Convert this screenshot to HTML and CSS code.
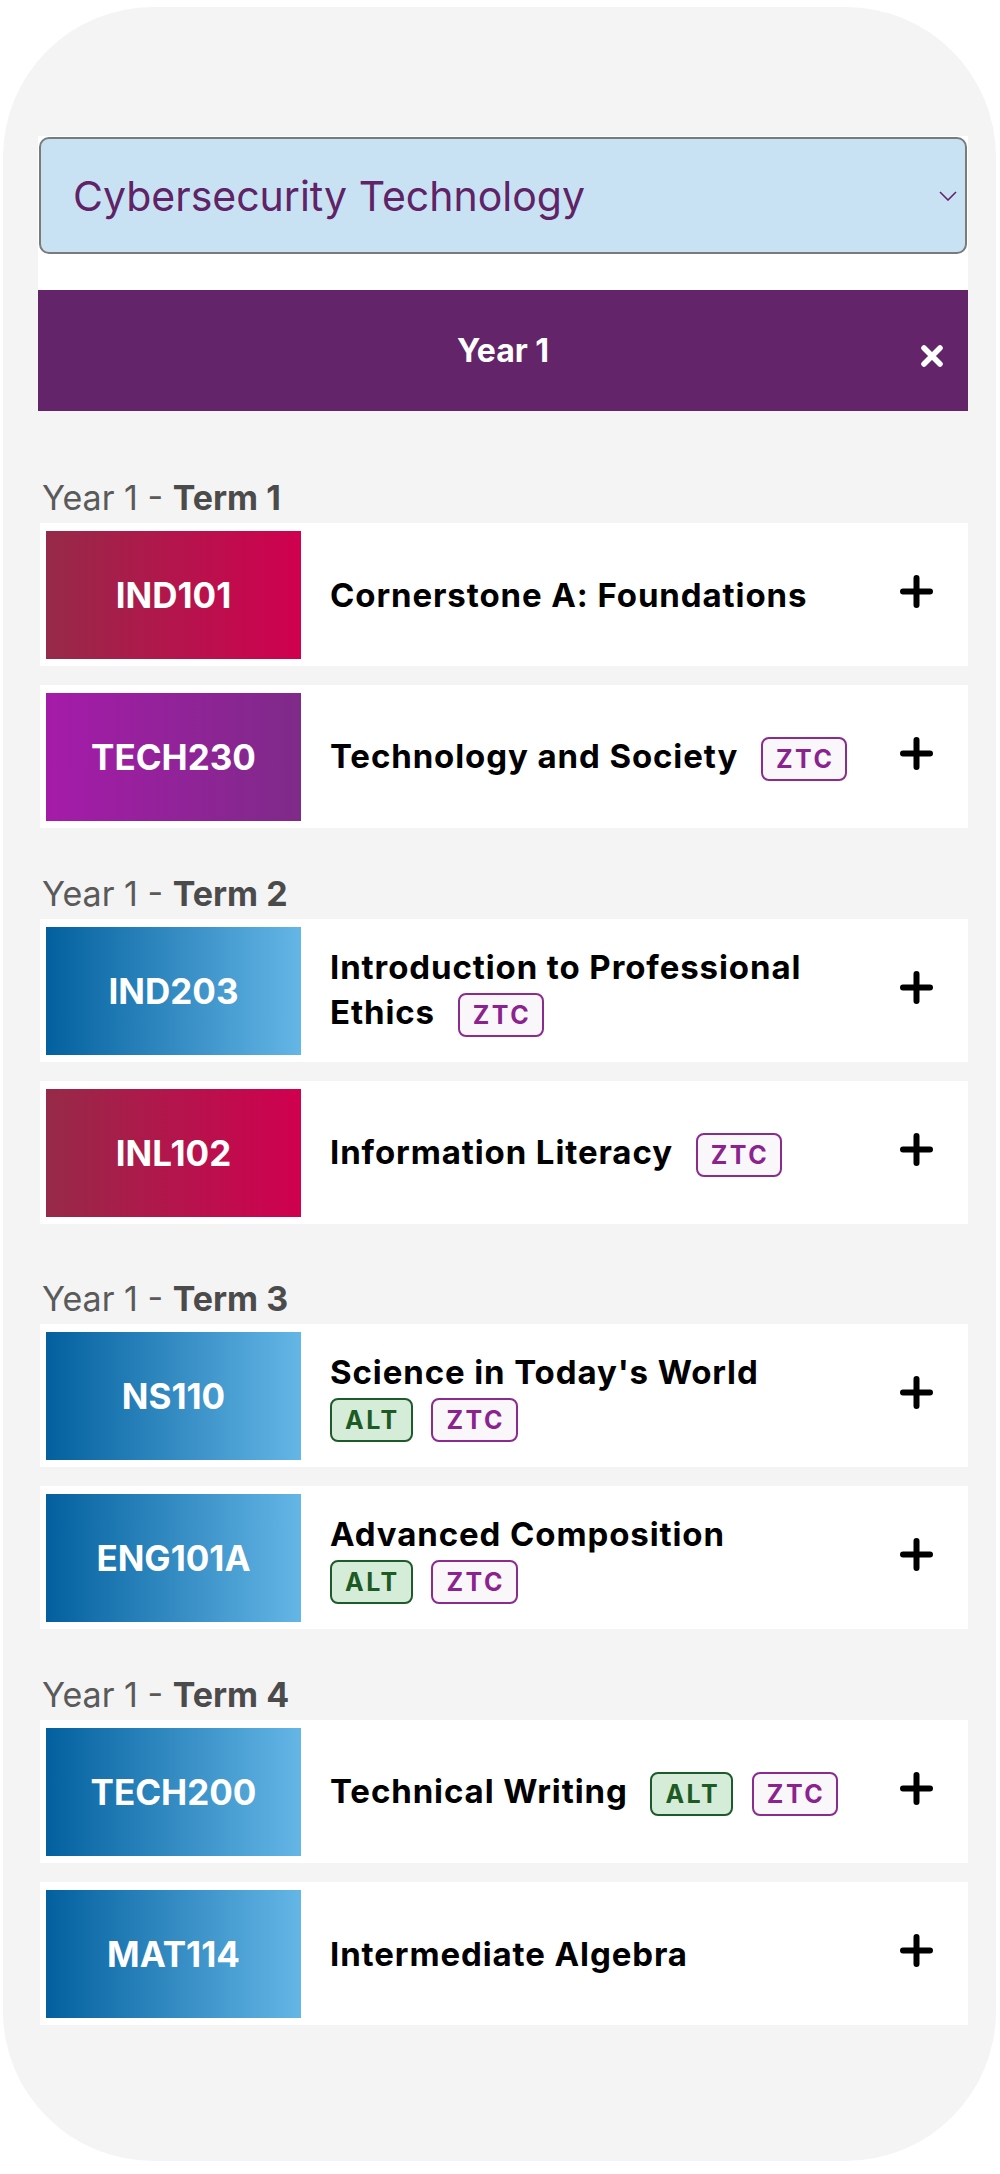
FILE: index.html
```html
<!DOCTYPE html>
<html lang="en">
<head>
  <meta charset="UTF-8" />
  <meta name="viewport" content="width=device-width, initial-scale=1.0" />
  <title>Program Map</title>
  <link rel="stylesheet" href="styles.css">
</head>
<body>
  <div class="phone">
    <div class="picker">
      <div class="select-wrap">
        <select class="program-select">
          <option>Cybersecurity Technology</option>
        </select>
        <svg class="chevron" width="18" height="10" viewBox="0 0 18 10"><path d="M1 1 L9 9 L17 1" fill="none" stroke="#63246a" stroke-width="1.6"/></svg>
      </div>
      <div class="year-bar">
        <span></span>
        <h2>Year 1</h2>
        <button class="close" aria-label="Close">
          <svg width="24" height="24" viewBox="0 0 24 24"><path d="M4 4 L20 20 M20 4 L4 20" stroke="#fff" stroke-width="5.5" stroke-linecap="round"/></svg>
        </button>
      </div>
    </div>

    <section class="term">
      <h3 class="term-title">Year 1 - <strong>Term 1</strong></h3>
      <div class="course-list">
        <div class="course">
          <div class="code red">IND101</div>
          <div class="course-name">Cornerstone A: Foundations</div>
          <button class="add" aria-label="Add"><svg width="33" height="33" viewBox="0 0 33 33"><path d="M16.5 3 V30 M3 16.5 H30" stroke="#000" stroke-width="6" stroke-linecap="round"/></svg></button>
        </div>
        <div class="course">
          <div class="code violet">TECH230</div>
          <div class="course-name">Technology and Society<i class="sp"></i> <span class="tags"><span class="tag ztc">ZTC</span></span></div>
          <button class="add" aria-label="Add"><svg width="33" height="33" viewBox="0 0 33 33"><path d="M16.5 3 V30 M3 16.5 H30" stroke="#000" stroke-width="6" stroke-linecap="round"/></svg></button>
        </div>
      </div>
    </section>

    <section class="term term-spaced">
      <h3 class="term-title">Year 1 - <strong>Term 2</strong></h3>
      <div class="course-list">
        <div class="course">
          <div class="code blue">IND203</div>
          <div class="course-name">Introduction to Professional Ethics<i class="sp"></i> <span class="tags"><span class="tag ztc">ZTC</span></span></div>
          <button class="add" aria-label="Add"><svg width="33" height="33" viewBox="0 0 33 33"><path d="M16.5 3 V30 M3 16.5 H30" stroke="#000" stroke-width="6" stroke-linecap="round"/></svg></button>
        </div>
        <div class="course">
          <div class="code red">INL102</div>
          <div class="course-name">Information Literacy<i class="sp"></i> <span class="tags"><span class="tag ztc">ZTC</span></span></div>
          <button class="add" aria-label="Add"><svg width="33" height="33" viewBox="0 0 33 33"><path d="M16.5 3 V30 M3 16.5 H30" stroke="#000" stroke-width="6" stroke-linecap="round"/></svg></button>
        </div>
      </div>
    </section>

    <section class="term">
      <h3 class="term-title">Year 1 - <strong>Term 3</strong></h3>
      <div class="course-list">
        <div class="course">
          <div class="code blue">NS110</div>
          <div class="course-name">Science in Today's World<i class="sp"></i> <span class="tags"><span class="tag alt">ALT</span> <span class="tag ztc">ZTC</span></span></div>
          <button class="add" aria-label="Add"><svg width="33" height="33" viewBox="0 0 33 33"><path d="M16.5 3 V30 M3 16.5 H30" stroke="#000" stroke-width="6" stroke-linecap="round"/></svg></button>
        </div>
        <div class="course">
          <div class="code blue">ENG101A</div>
          <div class="course-name">Advanced Composition<i class="sp"></i> <span class="tags"><span class="tag alt">ALT</span> <span class="tag ztc">ZTC</span></span></div>
          <button class="add" aria-label="Add"><svg width="33" height="33" viewBox="0 0 33 33"><path d="M16.5 3 V30 M3 16.5 H30" stroke="#000" stroke-width="6" stroke-linecap="round"/></svg></button>
        </div>
      </div>
    </section>

    <section class="term">
      <h3 class="term-title">Year 1 - <strong>Term 4</strong></h3>
      <div class="course-list">
        <div class="course">
          <div class="code blue">TECH200</div>
          <div class="course-name">Technical Writing<i class="sp"></i> <span class="tags"><span class="tag alt">ALT</span> <span class="tag ztc">ZTC</span></span></div>
          <button class="add" aria-label="Add"><svg width="33" height="33" viewBox="0 0 33 33"><path d="M16.5 3 V30 M3 16.5 H30" stroke="#000" stroke-width="6" stroke-linecap="round"/></svg></button>
        </div>
        <div class="course">
          <div class="code blue">MAT114</div>
          <div class="course-name">Intermediate Algebra</div>
          <button class="add" aria-label="Add"><svg width="33" height="33" viewBox="0 0 33 33"><path d="M16.5 3 V30 M3 16.5 H30" stroke="#000" stroke-width="6" stroke-linecap="round"/></svg></button>
        </div>
      </div>
    </section>
  </div>
</body>
</html>
```

FILE: styles.css
```css
body {
  margin: 0;
  background: #fff;
  font-family: Inter, 'Liberation Sans', sans-serif;
  color: #000;
}
.phone {
  box-sizing: border-box;
  width: 993px;
  margin: 7px 0 0 3px;
  padding: 129px 28px 136px 35px;
  background: #f4f4f4;
  border-radius: 150px;
}
.picker {
  background: #fff;
  padding-top: 1px;
  margin-bottom: 66px;
}
.select-wrap {
  position: relative;
  margin: 0 1px 36px;
}
.program-select {
  appearance: none;
  -webkit-appearance: none;
  display: block;
  width: 100%;
  height: 117px;
  box-sizing: border-box;
  border: 2px solid #7a7a7a;
  border-radius: 10px;
  background: #c8e2f4;
  color: #5f2366;
  font-family: Inter, 'Liberation Sans', sans-serif;
  font-size: 41px;
  padding: 0 60px 0 32px;
}
.chevron {
  position: absolute;
  right: 10px;
  top: 54px;
  pointer-events: none;
}
.year-bar {
  display: grid;
  grid-template-columns: 1fr auto 1fr;
  align-items: center;
  height: 121px;
  background: #63246a;
  color: #fff;
}
.year-bar h2 {
  margin: 0;
  font-size: 32px;
  font-weight: 700;
}
.close {
  justify-self: end;
  margin: 10px 24px 0 0;
  padding: 0;
  width: 24px;
  height: 24px;
  border: none;
  background: none;
  cursor: pointer;
}
.close svg,
.add svg {
  display: block;
}
.term + .term {
  margin-top: 45px;
}
.term-spaced {
  padding-bottom: 9px;
}
.term-title {
  margin: 0 0 5px 4px;
  font-size: 34px;
  line-height: 41px;
  font-weight: 400;
  color: #5a5a5a;
}
.term-title strong {
  font-weight: 700;
  color: #4b4b4b;
}
.course-list {
  display: flex;
  flex-direction: column;
  gap: 19px;
  padding-left: 2px;
}
.course {
  display: flex;
  align-items: center;
  background: #fff;
  padding: 8px 6px 7px;
}
.code {
  flex-shrink: 0;
  width: 255px;
  height: 128px;
  display: flex;
  align-items: center;
  justify-content: center;
  color: #fff;
  font-size: 35px;
  font-weight: 700;
}
.code.red {
  background: linear-gradient(90deg, #962a48, #d0004f);
}
.code.violet {
  background: linear-gradient(90deg, #a51ba9, #7f2a89);
}
.code.blue {
  background: linear-gradient(90deg, #03609e, #64b6e6);
}
.course-name {
  flex: 1;
  margin: 0 34px 0 29px;
  font-size: 33px;
  line-height: 45px;
  font-weight: 700;
  letter-spacing: 0.9px;
}
.sp {
  margin-right: 14px;
}
.tags {
  white-space: nowrap;
}
.tag {
  display: inline-block;
  vertical-align: middle;
  box-sizing: border-box;
  height: 44px;
  padding: 0 11px 0 13px;
  margin-right: 10px;
  border: 2px solid;
  border-radius: 8px;
  font-size: 25px;
  line-height: 40px;
  letter-spacing: 2.5px;
}
.tag.alt {
  color: #1d5a24;
  border-color: #1e5b2a;
  background: #d5ecd8;
}
.tag.ztc {
  color: #8b238f;
  border-color: #8b2a8f;
  background: #faf7fa;
}
.add {
  flex-shrink: 0;
  margin: 0 29px 8px 0;
  padding: 0;
  border: none;
  background: none;
  cursor: pointer;
}
```
